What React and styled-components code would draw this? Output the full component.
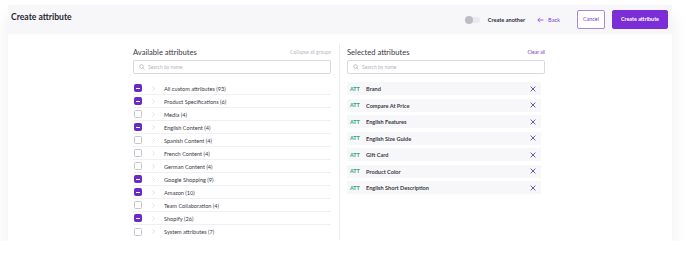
import styled, { createGlobalStyle } from "styled-components";

const GlobalStyle = createGlobalStyle`
  html, body {
    margin: 0;
    padding: 0;
    background: #ffffff;
    font-family: "Lato", "Open Sans", sans-serif;
    color: #2e2e3a;
  }
`;

const Frame = styled.div`
  width: 664px;
  margin: 5px 0 0 8px;
  background: #ffffff;
  box-shadow: 0 10px 16px rgba(40, 40, 70, 0.08);
`;

const Header = styled.header`
  height: 29px;
  display: flex;
  align-items: center;
  justify-content: space-between;
  padding: 0 4px 0 3px;
  background: #f7f7fa;
`;

const PageTitle = styled.h1`
  margin: 0 0 6px;
  font-size: 8.6px;
  font-weight: 700;
  color: #26262f;
`;

const Actions = styled.div`
  display: flex;
  align-items: center;
`;

const Toggle = styled.span`
  position: relative;
  width: 15px;
  height: 6px;
  border-radius: 3px;
  background: #e9e9ee;
  margin-right: 8px;

  &::after {
    content: "";
    position: absolute;
    left: 0;
    top: -1px;
    width: 8px;
    height: 8px;
    border-radius: 50%;
    background: #bdbdc6;
  }
`;

const ToggleLabel = styled.span`
  font-size: 5.6px;
  font-weight: 700;
  color: #2e2e3a;
  margin-right: 12px;
`;

const BackLink = styled.a`
  display: flex;
  align-items: center;
  gap: 4px;
  font-size: 5.6px;
  color: #7a3ad0;
  margin-right: 17px;
`;

const Button = styled.button`
  height: 19px;
  padding: 0 ${(p) => (p.$primary ? "8px" : "5px")};
  font-family: inherit;
  font-size: 5.4px;
  font-weight: ${(p) => (p.$primary ? 700 : 400)};
  border-radius: 2px;
  border: 1px solid ${(p) => (p.$primary ? "#7b2dd6" : "#a888d8")};
  background: ${(p) => (p.$primary ? "#7b2dd6" : "#ffffff")};
  color: ${(p) => (p.$primary ? "#ffffff" : "#7a3ad0")};
  margin-left: ${(p) => (p.$primary ? "7px" : "0")};
  margin-top: -1px;
`;

const Body = styled.div`
  display: flex;
  padding: 10px 0 1px 125px;
`;

const Column = styled.section`
  width: 198px;
  padding: ${(p) => (p.$left ? "0 8px 0 0" : "0 0 0 7px")};
  border-right: ${(p) => (p.$left ? "1px solid #ececf1" : "none")};
  min-height: 196px;
`;

const ColumnHead = styled.div`
  height: 16px;
  display: flex;
  align-items: center;
  justify-content: space-between;
`;

const ColumnTitle = styled.h2`
  margin: 0;
  font-size: 7.6px;
  font-weight: 400;
  color: #3a3a44;
`;

const HeadLink = styled.span`
  font-size: 5px;
  color: ${(p) => (p.$muted ? "#b9b9c2" : "#7a3ad0")};
`;

const Search = styled.div`
  height: 14px;
  box-sizing: border-box;
  border: 1px solid #d9d9df;
  border-radius: 2px;
  display: flex;
  align-items: center;
  gap: 3px;
  padding-left: 5px;
  font-size: 5px;
  color: #b3b3bc;
`;

const List = styled.ul`
  list-style: none;
  margin: 8px 0 0;
  padding: 0;
`;

const GroupRow = styled.li`
  height: 13px;
  box-sizing: border-box;
  display: flex;
  align-items: center;
  border-bottom: 1px solid #f0f0f4;
  font-size: 5.6px;
  color: #3a3a44;
  &:last-child {
    border-bottom: none;
  }
`;

const Check = styled.span`
  width: 8px;
  height: 8px;
  box-sizing: border-box;
  margin-left: 1px;
  border-radius: 1.5px;
  border: 1px solid ${(p) => (p.$on ? "#6a2ac4" : "#c4c4cc")};
  background: ${(p) => (p.$on ? "#6a2ac4" : "#ffffff")};
  display: flex;
  align-items: center;
  justify-content: center;

  &::after {
    content: "";
    display: ${(p) => (p.$on ? "block" : "none")};
    width: 4px;
    height: 1px;
    background: #ffffff;
  }
`;

const Chevron = styled.span`
  width: 22px;
  display: flex;
  justify-content: center;
`;

const SelectedRow = styled.li`
  height: 13px;
  width: 194px;
  margin-bottom: 3.5px;
  display: flex;
  align-items: center;
  background: #f7f7fa;
  font-size: 5.6px;
  font-weight: 700;
  color: #3a3a44;
`;

const Tag = styled.span`
  width: 19px;
  padding-left: 3px;
  box-sizing: border-box;
  color: #1fa57c;
  font-weight: 700;
  font-size: 5.4px;
`;

const Name = styled.span`
  flex: 1;
`;

const Remove = styled.span`
  width: 16px;
  display: flex;
  justify-content: center;
`;

const SearchIcon = () => (
  <svg width="6" height="6" viewBox="0 0 12 12" fill="none" stroke="#a9a9b3" strokeWidth="1.4">
    <circle cx="5" cy="5" r="3.6" />
    <path d="M7.7 7.7 11 11" />
  </svg>
);

const groups = [
  ["All custom attributes (93)", true],
  ["Product Specifications (6)", true],
  ["Media (4)", false],
  ["English Content (4)", true],
  ["Spanish Content (4)", false],
  ["French Content (4)", false],
  ["German Content (4)", false],
  ["Google Shopping (9)", true],
  ["Amazon (10)", true],
  ["Team Collaboration (4)", false],
  ["Shopify (26)", true],
  ["System attributes (7)", false],
];

const selected = [
  "Brand",
  "Compare At Price",
  "English Features",
  "English Size Guide",
  "Gift Card",
  "Product Color",
  "English Short Description",
];

export default function App() {
  return (
    <>
      <GlobalStyle />
      <Frame>
        <Header>
          <PageTitle>Create attribute</PageTitle>
          <Actions>
            <Toggle />
            <ToggleLabel>Create another</ToggleLabel>
            <BackLink>
              <svg width="7" height="6" viewBox="0 0 14 12" fill="none" stroke="#7a3ad0" strokeWidth="1.5">
                <path d="M13 6H2M6 1.5 1.5 6 6 10.5" />
              </svg>
              Back
            </BackLink>
            <Button>Cancel</Button>
            <Button $primary>Create attribute</Button>
          </Actions>
        </Header>
        <Body>
          <Column $left>
            <ColumnHead>
              <ColumnTitle>Available attributes</ColumnTitle>
              <HeadLink $muted>Collapse all groups</HeadLink>
            </ColumnHead>
            <Search>
              <SearchIcon />
              Search by name
            </Search>
            <List>
              {groups.map(([label, on]) => (
                <GroupRow key={label}>
                  <Check $on={on} />
                  <Chevron>
                    <svg width="3" height="5" viewBox="0 0 6 10" fill="none" stroke="#d2d2d8" strokeWidth="1.4">
                      <path d="M1 1l4 4-4 4" />
                    </svg>
                  </Chevron>
                  {label}
                </GroupRow>
              ))}
            </List>
          </Column>
          <Column>
            <ColumnHead>
              <ColumnTitle>Selected attributes</ColumnTitle>
              <HeadLink>Clear all</HeadLink>
            </ColumnHead>
            <Search>
              <SearchIcon />
              Search by name
            </Search>
            <List>
              {selected.map((name) => (
                <SelectedRow key={name}>
                  <Tag>ATT</Tag>
                  <Name>{name}</Name>
                  <Remove>
                    <svg width="6" height="6" viewBox="0 0 10 10" stroke="#6b4fa8" strokeWidth="1.6">
                      <path d="M1 1l8 8M9 1 1 9" />
                    </svg>
                  </Remove>
                </SelectedRow>
              ))}
            </List>
          </Column>
        </Body>
      </Frame>
    </>
  );
}
